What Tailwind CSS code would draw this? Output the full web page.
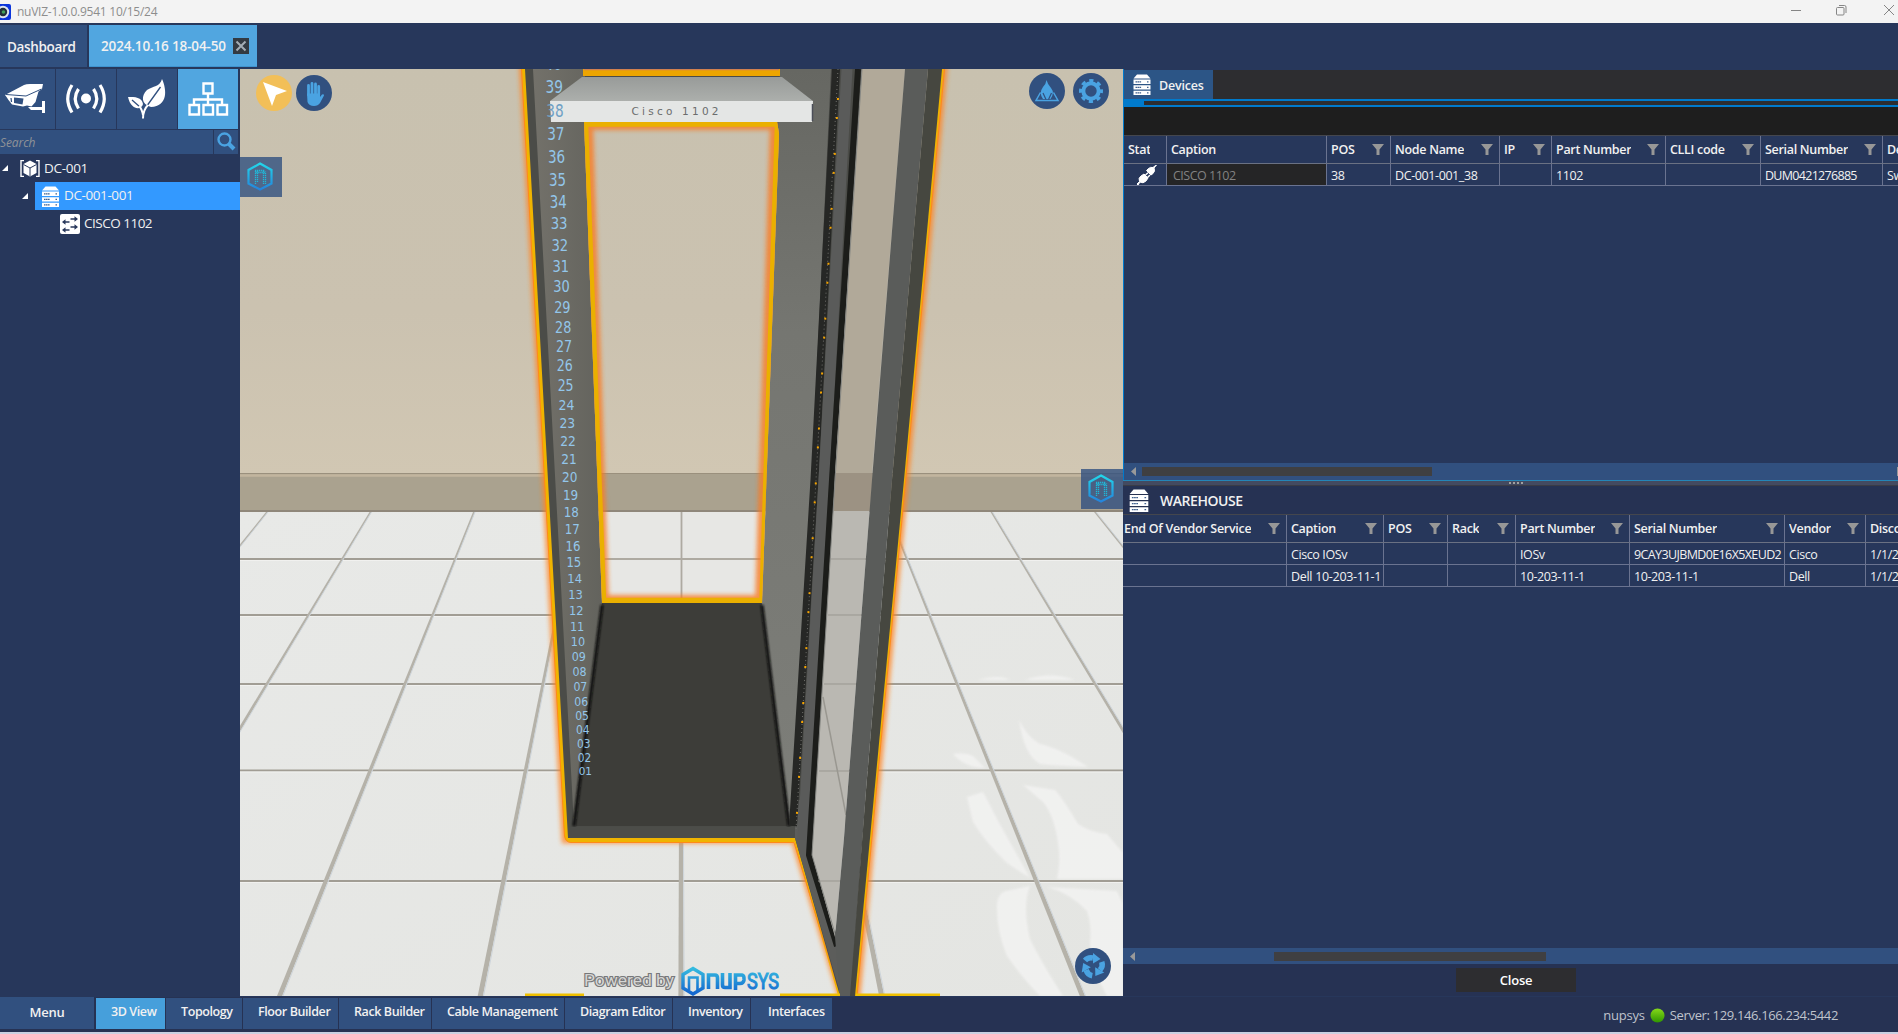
<!DOCTYPE html>
<html lang="en">
<head>
<meta charset="utf-8">
<title>nuVIZ</title>
<script src="https://cdn.jsdelivr.net/npm/@tailwindcss/browser@4"></script>
</head>
<body class="w-[1898px] h-[1034px] overflow-hidden flex flex-col bg-[#27375b] text-[#f1f1f1] text-[12px] font-['Open_Sans',sans-serif] whitespace-nowrap">
<svg class="absolute w-0 h-0">
  <defs>
    <linearGradient id="hexg" x1="0" y1="0" x2="0" y2="1"><stop offset="0" stop-color="#22d6ea"/><stop offset="1" stop-color="#2484dc"/></linearGradient>
    <symbol id="funnel" viewBox="0 0 12 11"><path d="M0 0H12L7.5 5.5V11H4.5V5.5Z" fill="#979797"/></symbol>
    <symbol id="server" viewBox="0 0 18 21"><path d="M4 0.5H14L17.5 4.5H.5Z" fill="#fff"/><path d="M.5 5.500H17.500V10H.5ZM.5 11.200H17.500V15.500H.5ZM.5 16.700H17.500V21H.5Z" fill="#fff"/><path d="M2.500 7.800H8.500M2.500 13.400H8.500M2.500 18.900H8.500M14 7.800H15.500M14 13.400H15.500M14 18.900H15.500" stroke="#40618f" stroke-width="1.200" stroke-dasharray="1.600 .4"/></symbol>
    <symbol id="hex" viewBox="0 0 26 29"><path d="M13 1.500L24.500 8V21.500L13 27.500L1.500 21.500V8Z" fill="none" stroke="url(#hexg)" stroke-width="2.200"/><path d="M8.500 22V8.500M10.500 20V8.500M8 8.500H18M8.500 10.500H18M16.500 22V8.500M18.500 22V9.500" fill="none" stroke="#20b8d8" stroke-width="1.300" stroke-dasharray="1.300 .7"/></symbol>
  </defs>
</svg>

<!-- window title bar -->
<header class="h-[23px] shrink-0 bg-[#f3f3f3] flex items-center text-[#8d8d8d]">
  <svg class="w-[11px] h-4 shrink-0" viewBox="5 0 11 16"><rect x="0" width="16" height="16" rx="2" fill="#0b35dc"/><circle cx="8" cy="8" r="6.200" fill="#dfe6ee"/><circle cx="8" cy="8" r="4.200" fill="#23303a"/><circle cx="8.500" cy="8" r="1.800" fill="#43a05a"/></svg>
  <span class="ml-1.5 text-[12px] tracking-[-0.25px]">nuVIZ-1.0.0.9541 10/15/24</span>
  <svg class="ml-auto mr-[4px] shrink-0 -mt-1" width="103" height="12" viewBox="0 0 103 12" fill="none" stroke="#858585"><path d="M0 6.500H10M93 1L103 11M103 1L93 11"/><rect x="45.500" y="3.500" width="7.500" height="7.500" rx="1"/><path d="M48 1.500H53.500Q55 1.500 55 3V9"/></svg>
</header>

<!-- document tabs -->
<nav class="h-[46px] shrink-0 flex items-start pt-[2px] gap-[2px] text-[13.5px] font-semibold">
  <div class="w-[87px] h-[42px] bg-[#31507f] pl-[7px] pt-[2px] flex items-center"><span class="tracking-[-0.35px]">Dashboard</span></div>
  <div class="w-[168px] h-[42px] bg-[#51a6e0] border-b border-[#3f93cf] pl-3 pr-2 flex items-center justify-between"><span class="tracking-[-0.15px] pt-[2px]">2024.10.16 18-04-50</span>
    <svg class="shrink-0" width="16" height="16" viewBox="0 0 16 16"><rect width="16" height="16" fill="#333a42"/><path d="M3.500 3.500L12.500 12.500M12.500 3.500L3.500 12.500" stroke="#a4adb5" stroke-width="2"/></svg>
  </div>
</nav>

<main class="h-[927px] shrink-0 flex">
  <!-- navigation tree -->
  <aside class="w-[240px] shrink-0 flex flex-col">
    <div class="h-[60px] flex gap-px">
      <div class="w-[55px] bg-[#31507f]"><svg width="55" height="60" viewBox="0 0 55 60"><path d="M5 26L24 16Q26 15 30 15L43 15L42 20L38.500 22.500L35.500 33L31.500 37.500L27 36.500L23 37.500L12 35.500L8.500 31L6.500 28Z" fill="#fff"/><path d="M14 28.500L23.500 29.500L22.500 35.500L14 34Z" fill="#31507f"/><path d="M6 25.500L26 27L41.500 20" fill="none" stroke="#31507f" stroke-width="1"/><path d="M11 29L11.500 33" stroke="#31507f" stroke-width="1.300"/><path d="M28 38L42 38V32H45V44H42V41H31Z" fill="#fff"/></svg></div>
      <div class="w-[60px] bg-[#31507f]"><svg width="60" height="60" viewBox="0 0 60 60" fill="none" stroke="#fff" stroke-width="3.200"><circle cx="30" cy="29.500" r="5" fill="#fff" stroke="none"/><path d="M22.500 20Q16 29.500 22.500 39.500M37.500 20Q44 29.500 37.500 39.500M16 16Q7.500 29.500 16 43.500M44 16Q52.500 29.500 44 43.500"/></svg></div>
      <div class="w-[60px] bg-[#31507f]"><svg width="60" height="60" viewBox="0 0 60 60"><path d="M45 10C50 21 51 37 34 38C24 35 24 27 30 21C36 17 43 18 45 10ZM11 28C18 28 25 28 26 35C25 41 14 42 11 28Z" fill="#fff"/><path d="M43.500 18L32 34L27.500 40M15 31L23 38" fill="none" stroke="#31507f" stroke-width="1.300"/><path d="M31 36C27 40 26 44 26 49.500M22 37Q25 40 26 46" fill="none" stroke="#fff" stroke-width="2"/></svg></div>
      <div class="w-[60px] bg-[#51a6e0]"><svg width="60" height="60" viewBox="0 0 60 60" fill="none" stroke="#fff" stroke-width="2.400"><path d="M25.500 14.500H34.500V24.500H25.500ZM11.500 36H21V45.500H11.500ZM25.500 36H35V45.500H25.500ZM39.500 36H49V45.500H39.500ZM30 25V36M16 36V30.500H44V36" /></svg></div>
    </div>
    <div class="h-[24px] mt-px mr-[2px] flex gap-px">
      <div class="w-[213px] bg-[#31507f] text-[#8f9297] italic leading-[25px]"><span class="tracking-[-0.1px]">Search</span></div>
      <div class="w-[24px] bg-[#31507f]"><svg width="24" height="24" viewBox="0 0 24 24" fill="none" stroke="#4aa3e2"><circle cx="10.500" cy="9.500" r="6" stroke-width="2.400"/><path d="M15 14L20 19" stroke-width="4"/></svg></div>
    </div>
    <ul class="text-[13.5px]">
      <li class="h-[28px] flex items-center"><svg class="ml-[2px]" width="6" height="6"><path d="M6 0V6H0Z" fill="#fff"/></svg>
        <svg class="ml-[12px]" width="20" height="17" viewBox="0 0 20 17"><path d="M4 .5H1V16.500H4M16 .5H19V16.500H16" fill="none" stroke="#fff" stroke-width="1.400"/><path d="M10 .5L16.500 4V13L10 16.500L3.500 13V4Z" fill="#fff"/><path d="M3.500 4.500L10 8L16.500 4.500M10 8V16" stroke="#27375b" fill="none"/></svg>
        <span class="ml-[4px] tracking-[-0.3px]">DC-001</span></li>
      <li class="h-[28px] flex items-center"><svg class="ml-[22px]" width="6" height="6"><path d="M6 0V6H0Z" fill="#fff"/></svg>
        <div class="ml-[7px] w-[205px] h-[28px] bg-[#3399ff] flex items-center"><svg class="ml-[6px]" width="19" height="21"><use href="#server"/></svg><span class="ml-[4px] mb-[2px] tracking-[-0.4px]">DC-001-001</span></div></li>
      <li class="h-[28px] flex items-center"><svg class="ml-[60px]" width="20" height="20" viewBox="0 0 20 20"><rect width="20" height="20" rx="2" fill="#fff"/><path d="M10.500 5H16M9.500 8H4M10.500 13H16M9.500 16H4" stroke="#27375b" stroke-width="1.500"/><path d="M14.500 2.300L18 5L14.500 7.700ZM5.500 5.300L2 8L5.500 10.700ZM14.500 10.300L18 13L14.500 15.700ZM5.500 13.300L2 16L5.500 18.700Z" fill="#27375b"/></svg>
        <span class="ml-[4px] mb-[2px] tracking-[-0.5px]">CISCO 1102</span></li>
    </ul>
  </aside>

  <!-- 3D viewport -->
  <section class="relative w-[883px] shrink-0 overflow-hidden">
    <svg class="block" width="883" height="927" viewBox="240 69 883 927">
      <defs>
        <linearGradient id="wall" gradientUnits="userSpaceOnUse" x1="0" y1="69" x2="0" y2="474"><stop offset="0" stop-color="#c8c1af"/><stop offset=".6" stop-color="#cbc2b0"/><stop offset="1" stop-color="#d1c7b3"/></linearGradient>
        <linearGradient id="floor" x1="0" y1="0" x2="1" y2="1"><stop offset="0" stop-color="#e8e9e7"/><stop offset="1" stop-color="#e4e5e2"/></linearGradient>
        <linearGradient id="pl" x1="0" y1="0" x2="1" y2="0"><stop offset="0" stop-color="#73716a"/><stop offset="1" stop-color="#63635d"/></linearGradient>
        <linearGradient id="pr" x1="0" y1="0" x2="0" y2="1"><stop offset="0" stop-color="#666762"/><stop offset=".35" stop-color="#757671"/><stop offset="1" stop-color="#7d7e79"/></linearGradient>
        <linearGradient id="shelf" x1="0" y1="0" x2="0" y2="1"><stop offset="0" stop-color="#989b99"/><stop offset="1" stop-color="#acafac"/></linearGradient>
        <linearGradient id="lg" gradientUnits="userSpaceOnUse" x1="0" y1="968" x2="0" y2="993"><stop offset="0" stop-color="#35bce0"/><stop offset="1" stop-color="#1467cf"/></linearGradient>
        <filter id="b2" x="-20%" y="-20%" width="140%" height="140%"><feGaussianBlur stdDeviation="2"/></filter>
        <filter id="b1"><feGaussianBlur stdDeviation="1"/></filter>
        <clipPath id="hole"><path d="M584 121H777L779 134L762 603H602Z"/></clipPath>
      </defs>
      <rect x="240" y="69" width="883" height="405" fill="url(#wall)"/>
      <rect x="240" y="473" width="883" height="39" fill="#aaa28f"/>
      <path d="M240 473.500H1123" stroke="#9a907d"/><path d="M240 475.500H1123" stroke="#c2b59e" stroke-width="2.500"/>
      <rect x="240" y="511" width="883" height="485" fill="url(#floor)"/>
      <path d="M240 511H1123" stroke="#8f877a" stroke-width="2"/>
      <g fill="#f3f3f2" filter="url(#b1)" opacity=".85">
        <path d="M1019 720Q1028 738 1040 744Q1060 748 1088 767Q1060 766 1040 764Q1024 755 1019 720Z"/>
        <path d="M1023 785L1055 790Q1064 800 1078 824Q1090 832 1107 834L1123 853V879H1057Q1061 860 1058 843Q1054 815 1043 802Z"/>
        <path d="M967 797L983 792Q990 805 997 819L1030 878Q1020 872 1007 863Q985 842 973 822Z"/>
        <path d="M997 904Q998 893 1006 891L1030 886Q1022 905 1030 939Q1040 960 1063 996H1040Q1020 975 1007 956Q996 930 997 904Z"/>
        <path d="M1047 887L1117 891L1123 904V996H1107Q1092 970 1090 945Q1092 925 1087 911Q1070 893 1047 887Z"/>
        <path d="M953 754Q965 752 973 756L985 768Q965 768 953 754ZM978 680Q1000 674 1010 680ZM1025 680Q1050 671 1075 680Z"/>
      </g>
      <g id="grout"></g>

      <!-- selection glow round the rack -->
      <path d="M523 60L566 839H795L842 996H856L944 60" fill="none" stroke="#ff8420" stroke-width="9" filter="url(#b2)" opacity=".75"/>
      <path d="M523.500 60L566.500 836Q567 840 570 840H796L841 998H854.500L942.500 60" fill="none" stroke="#efb400" stroke-width="4.200"/>
      <path d="M521.500 69L564.500 836Q566 842.500 571 842.500H794L837 985M944.500 69L857 996" fill="none" stroke="#ff8a18" stroke-width="1"/>

      <path d="M525 69H862L813 838L812 855L836 937L840 996L795 838H568Z" fill="#4b4c48"/>
      <path d="M795 838V800H815L812 855L836 937L841 996Z" fill="#5c5d5b"/>
      <path d="M533 69H585V121L602 603L574 826Z" fill="url(#pl)"/>
      <path d="M780 69H831L812 470L790 826L762 603Z" fill="url(#pr)"/>
      <path d="M602 603H761L790 826H573Z" fill="#3d3d39"/>
      <path d="M602 605L574 826M762 605L789 826" stroke="#10110f" stroke-width="3" filter="url(#b1)"/>
      <path d="M568 827H795V838H568Z" fill="#4c4d49"/>
      <path d="M836 69L814.500 480L793 826" fill="none" stroke="#262725" stroke-width="8"/>
      <path d="M838 69L816 480L796 830" fill="none" stroke="#70706c" stroke-width="1" stroke-dasharray="1 3"/>
      <path d="M838 98L816 480L796 830" fill="none" stroke="#f5a400" stroke-width="2" stroke-dasharray="2 17 2 34"/>
      <path d="M847 69L824 480L803 840" fill="none" stroke="#5a5b5a" stroke-width="11"/>
      <path d="M858 69L832 480L809 855L837 946" fill="none" stroke="#1c1d1a" stroke-width="6" stroke-linejoin="round"/>
      <path d="M862 69H905L872 480L844 838L835 937L812 855L835 480Z" fill="#bab8b2"/>
      <path d="M862 69H905L872 473H835Z" fill="#b1a999"/><path d="M835 473H873L870 511H833.500Z" fill="#9c9283"/>
      <path d="M831 559H866M828 615H861M824 684H856M819 771H849M818 881H840" stroke="#999790" fill="none"/>
      <path d="M823 697L846 815" stroke="#999790" stroke-width="1.500"/>
      <path d="M862 69L835 480L812 855L836 937" fill="none" stroke="#858682" stroke-width="1"/>
      <path d="M905 69H928L892 480L866 790L851 996H840L835 937L844 838L872 480Z" fill="#5a5c5a"/>
      <path d="M928 69H942L904 480L855 996H850L866 790L892 480Z" fill="#464740"/>

      <!-- opening through the rack -->
      <g clip-path="url(#hole)">
        <path d="M584 121H780V474H584Z" fill="url(#wall)"/><path d="M590 473H780V511H590Z" fill="#aaa28f"/>
        <path d="M590 473.500H780" stroke="#9a907d"/>
        <path d="M590 511H780V605H590Z" fill="#e7e7e4"/>
        <path d="M590 511H780" stroke="#8f877a" stroke-width="2"/><path d="M590 559H780M681.500 512V603" stroke="#aeaaa1" stroke-width="1.800"/>
        <path d="M586 123H777L762 602H602Z" fill="none" stroke="#f97a22" stroke-width="14" filter="url(#b2)" opacity=".8"/>
        <path d="M585.500 124H777.500L762 600.500H603.500Z" fill="none" stroke="#eab000" stroke-width="5.500"/>
      </g>
      <path d="M583 69H780V76H583Z" fill="#eda500"/><path d="M584 69.500H779" stroke="#d08050" stroke-width="1.500"/>
      <path d="M582 77H782L813 101H550Z" fill="url(#shelf)"/><path d="M550 101H813L812 122H551Z" fill="#e4e6e5"/>
      <path d="M812.500 104V121" stroke="#4b4e58" stroke-width="1.500"/>
      <text x="631.500" y="115" font-size="10.500" textLength="87" lengthAdjust="spacing" fill="#6b6d6d" font-family="'DejaVu Sans', sans-serif">Cisco 1102</text>
      <g id="units" fill="#93c6ea" text-anchor="middle" font-family="'DejaVu Sans', sans-serif"></g>

      <g fill="none"><path d="M526 994H582M784 994H836M858 994H940" stroke="#ff9020" stroke-width="6" filter="url(#b1)"/><path d="M525 995H584M780 995H840M856 995H940" stroke="#f0c000" stroke-width="3"/></g>
      <text x="584" y="986" font-size="16" textLength="90" lengthAdjust="spacingAndGlyphs" fill="#d5d5d3" stroke="#77787a" stroke-width="2.200" paint-order="stroke" font-family="Roboto, sans-serif">Powered by</text>
      <path d="M693 968.500L703 974.500V988L693 994L683 988V974.500Z" fill="none" stroke="url(#lg)" stroke-width="3.400"/>
      <path d="M689 990V977.500H697.500V990" fill="none" stroke="url(#lg)" stroke-width="2.600"/>
      <path d="M708.500 989V975H715Q717.500 975 717.500 978V989M722.500 973V985Q722.500 987.500 725 987.500H730V973M735.500 990V975H742Q744.500 975.500 744 980Q743.500 983.500 740 983.500H736" fill="none" stroke="url(#lg)" stroke-width="3.600"/>
      <text x="747" y="989" font-size="22" textLength="32" lengthAdjust="spacingAndGlyphs" fill="url(#lg)" stroke="url(#lg)" stroke-width="1.100" font-family="Roboto, sans-serif">SYS</text>
    </svg>

    <!-- floating controls -->
    <div class="absolute left-4 top-[6px] flex gap-1">
      <svg width="36" height="36" viewBox="0 0 36 36"><circle cx="18" cy="18" r="18" fill="#f2bf58"/><path d="M7 7L31 16L20 20L16 31Z" fill="#fff"/></svg>
      <svg width="36" height="36" viewBox="0 0 36 36"><circle cx="18" cy="18" r="18" fill="#31507f"/><path d="M12.500 20V10.500M16 19V8.500M19.500 19V9M22.700 20V11.500" stroke="#4aa3e2" stroke-width="2.800" stroke-linecap="round"/><path d="M11 18.500H24V22L26 19.500Q28 18.500 28 20.500L24 28Q22 31 18 31Q13 31 11.500 27Z" fill="#4aa3e2"/></svg>
    </div>
    <div class="absolute left-[789px] top-[4px] flex gap-2">
      <svg width="36" height="36" viewBox="0 0 36 36"><circle cx="18" cy="18" r="18" fill="#31507f"/><path d="M11.500 19.500L7 27.500H29L24.500 19.500" fill="none" stroke="#4aa3e2" stroke-width="1.500"/><path d="M17.500 7Q18.500 11 22 15Q26 20 21.500 26H14Q9.500 20 14 14Q17 11 17.500 7Z" fill="#4aa3e2"/><path d="M14 20L17 26.500M22.500 20L19.500 26.500" stroke="#31507f" stroke-width="1.200"/></svg>
      <svg width="36" height="36" viewBox="0 0 36 36"><circle cx="18" cy="18" r="18" fill="#31507f"/><circle cx="18" cy="18" r="7.700" fill="none" stroke="#4aa3e2" stroke-width="4"/><circle cx="18" cy="18" r="10.500" fill="none" stroke="#4aa3e2" stroke-width="3" stroke-dasharray="4.200 4.047" stroke-dashoffset="2.100"/></svg>
    </div>
    <div class="absolute left-0 top-[88px] w-[42px] h-[40px] bg-[#31507f]/80 pl-[7px] pt-[5px]"><svg width="26" height="29"><use href="#hex"/></svg></div>
    <div class="absolute right-0 top-[400px] w-[42px] h-[40px] bg-[#31507f]/80 pl-[7px] pt-[5px]"><svg width="26" height="29"><use href="#hex"/></svg></div>
    <svg class="absolute left-[835px] top-[879px]" width="36" height="36" viewBox="0 0 36 36"><circle cx="18" cy="18" r="18" fill="#31507f"/><g id="arc"><path d="M10 12.500Q13 9 18 10" fill="none" stroke="#4aa3e2" stroke-width="5.500"/><path d="M18 5L25.500 11L18 15.500Z" fill="#4aa3e2"/></g><use href="#arc" transform="rotate(120 18 18)"/><use href="#arc" transform="rotate(240 18 18)"/></svg>
  </section>

  <!-- device panels -->
  <section class="w-[775px] shrink-0 flex flex-col overflow-hidden">
    <div class="h-[411px] shrink-0 border-l border-[#007acc] flex flex-col">
      <div class="h-[31px] shrink-0 mt-px bg-[#2d2d30] border-b-2 border-[#007acc] flex">
        <div class="w-[89px] bg-[#2c5586] flex items-center font-semibold text-[12.5px]"><svg class="ml-[9px]" width="18" height="21"><use href="#server"/></svg><span class="ml-[8px] mt-[3px] tracking-[-0.2px]">Devices</span></div>
      </div>
      <div class="h-[6px] shrink-0 bg-[#2d2d30] border-b-2 border-[#007acc]"><div class="w-5 h-1 bg-[#007acc]"></div></div>
      <div class="h-[28px] shrink-0 bg-[#1e1e1e]"></div>
      <div id="devices" class="h-[328px] shrink-0 border-t border-[#44464d]"></div>
      <div class="h-[17px] shrink-0 bg-[#31507f] flex items-center"><svg class="ml-[7px]" width="5" height="9"><path d="M5 0V9L0 4.500Z" fill="#999"/></svg><div class="ml-[6px] w-[290px] h-[9px] bg-[#3f3f41]"></div><div class="ml-auto w-px h-[9px] bg-[#999]"></div></div>
    </div>
    <div class="h-[6px] shrink-0 bg-[#434a60] border-t border-t-[#2486b8] border-b border-b-[#3a3c46] flex justify-center pr-5 gap-[2px] pt-px pl-[31px]">
      <i class="w-[2px] h-[2px] bg-[#a0a0a0]"></i><i class="w-[2px] h-[2px] bg-[#a0a0a0]"></i><i class="w-[2px] h-[2px] bg-[#a0a0a0]"></i><i class="w-[2px] h-[2px] bg-[#a0a0a0]"></i>
    </div>
    <div class="h-[28px] shrink-0 bg-[#263253] flex items-center"><svg class="ml-[6px]" width="20" height="23"><use href="#server"/></svg><span class="ml-[11px] text-[14px] font-semibold tracking-[-0.45px]">WAREHOUSE</span></div>
    <div id="warehouse" class="h-[434px] shrink-0 border-t border-[#44464d]"></div>
    <div class="h-[16px] shrink-0 bg-[#31507f] flex items-center"><svg class="ml-[7px]" width="5" height="9"><path d="M5 0V9L0 4.500Z" fill="#999"/></svg><div class="ml-[139px] w-[272px] h-[9px] bg-[#3f3f41]"></div></div>
    <div class="h-[32px] bg-[#263253] pt-1"><div class="ml-[333px] w-[120px] h-6 bg-[#2d2d30] text-white text-[13px] font-semibold flex items-center justify-center"><span class="tracking-[-0.2px] pt-[2px]">Close</span></div></div>
  </section>
</main>

<!-- module bar -->
<footer class="h-[38px] shrink-0 flex items-start bg-[#263253] border-b-2 border-[#c9d0e2] border-t border-t-[#27375b]">
  <div class="w-[94px] h-[32px] bg-[#31507f] flex items-center justify-center text-[13px] font-semibold"><span class="tracking-[-0.3px]">Menu</span></div>
  <div id="modules" class="ml-[2px] mt-px flex gap-px text-[12.5px] font-semibold"></div>
  <div class="ml-auto mr-[60px] h-[37px] flex items-center text-[13px] text-[#bfc3cc]"><span class="tracking-[-0.2px]">nupsys</span><svg class="mx-[5px]" width="15" height="15"><defs><linearGradient id="led" x1="0" y1="0" x2="0" y2="1"><stop offset="0" stop-color="#86d91a"/><stop offset="1" stop-color="#2f9600"/></linearGradient></defs><circle cx="7.500" cy="7.500" r="7" fill="url(#led)"/></svg><span class="tracking-[-0.36px]">Server: 129.146.166.234:5442</span></div>
</footer>

<script>
const funnel = '<svg class="ml-auto mr-[6px] shrink-0 -mt-[1px]" width="12" height="11"><use href="#funnel"/></svg>';
const plug = '<svg class="ml-[8px]" width="20" height="20" viewBox="0 0 20 20"><path d="M19.500 0L17 3Q18.500 6 16 8.500L14 10L9.500 5.500L11 4Q13.500 1.500 16 2.500L18.500 .500ZM7 9L11 13L9 16Q6 19 3 17L1 20L0 19L2.500 16.500Q1 13 4 11Z" fill="#fff" stroke="#fff"/><path d="M8.500 10L11 7.800M10.500 12.500L13 10" stroke="#fff" stroke-width="1.500"/></svg>';
// letter-spacing in px for the long serial numbers
const tight = { 'DUM0421276885': -0.7, '9CAY3UJBMD0E16X5XEUD2': -0.62, 'Dell 10-203-11-1': -0.3 };
// cols: [width, title, has filter]
function table(id, cols, rows, headH, rowHs, first) {
  let h = `<div class="flex border-b border-[#6a7183]" style="height:${headH}px">`;
  cols.forEach((c, i) => h += `<div class="shrink-0 flex items-center overflow-hidden border-r border-[#6a7390] font-semibold text-[12.5px]" style="width:${c[0]}px;padding-left:${i ? 4 : first}px"><span class="overflow-hidden pt-[2px] tracking-[-0.3px]"${c[1] === 'Stat' ? ' style="width:22px"' : ''}>${c[1]}</span>${c[2] ? funnel : ''}</div>`);
  h += '</div>';
  rows.forEach((r, k) => {
    h += `<div class="flex border-b border-[#6a7390]" style="height:${rowHs[k]}px">`;
    cols.forEach((c, i) => {
      const t = r[i];
      h += t === 'plug'
        ? `<div class="shrink-0 flex items-center border-r border-[#6a7390]" style="width:${c[0]}px"><span class="ml-[5px]">${plug}</span></div>`
        : t.startsWith('*')
        ? `<div class="shrink-0 flex items-center bg-[#252526] text-[#828282] pl-[6px] pt-[3px] text-[12.5px] tracking-[-0.5px] border-r border-[#6a7390]" style="width:${c[0]}px">${t.slice(1)}</div>`
        : `<div class="shrink-0 flex items-center pl-[4px] pt-[3px] text-[12.5px] tracking-[-0.4px] border-r border-[#6a7390]" style="width:${c[0]}px${tight[t] ? ';letter-spacing:' + tight[t] + 'px' : ''}">${t}</div>`;
    });
    h += '</div>';
  });
  document.getElementById(id).innerHTML = h;
}
table('devices',
  [[43,'Stat',0],[160,'Caption',0],[64,'POS',1],[109,'Node Name',1],[52,'IP',1],[114,'Part Number',1],[95,'CLLI code',1],[122,'Serial Number',1],[60,'Description',0]],
  [['plug','*CISCO 1102','38','DC-001-001_38','','1102','','DUM0421276885','Switch']], 28, [22], 4);
table('warehouse',
  [[164,'End Of Vendor Service',1],[97,'Caption',1],[64,'POS',1],[68,'Rack',1],[114,'Part Number',1],[155,'Serial Number',1],[81,'Vendor',1],[80,'Discovered',0]],
  [['','Cisco IOSv','','','IOSv','9CAY3UJBMD0E16X5XEUD2','Cisco','1/1/2024'],['','Dell 10-203-11-1','','','10-203-11-1','10-203-11-1','Dell','1/1/2024']], 28, [22,22], 1);

document.getElementById('modules').innerHTML = [['3D View',69],['Topology',76],['Floor Builder',95],['Rack Builder',92],['Cable Management',132],['Diagram Editor',107],['Inventory',77],['Interfaces',81]]
  .map(([t, w], i) => `<div class="h-[31px] flex items-center ${i ? 'bg-[#31507f]' : 'bg-[#469fdb]'}" style="width:${w}px;padding-left:${i === 7 ? 17 : 15}px"><span class="-mt-[2px] tracking-[-0.4px]">${t}</span></div>`).join('');

let g = '';
for (const y of [559, 615, 684, 770.500, 881]) g += `<path d="M240 ${y}H1123" stroke="#a19d94" stroke-width="2"/><path d="M240 ${y + 1.5}H1123" stroke="#f1f1ef"/>`;
for (let k = -5; k <= 5; k++) {
  const a = 681 + k * 103.5, b = 681 + k * 200.7;
  g += `<path d="M${a - 1} 512H${a + 1}L${b + 2.6} 996H${b - 2.6}Z" fill="#b5b2a9"/><path d="M${a + 1} 512L${b + 3.2} 996" stroke="#cdd4da" stroke-width="1"/>`;
}
document.getElementById('grout').innerHTML = g;

// rack unit labels, bottom (01) to top
const ys = [771.5,758,744,730,716,701.5,687,672,657,642,626.5,611,595,579,562.5,546,529,512,495,477,459.5,441,423,404.5,386,366,347,327.5,307.5,287,266,245,223.5,202,180,157,134,111,87,64];
document.getElementById('units').innerHTML = ys.map((y, i) => {
  const f = 11.3 + i * 0.12 + i * i * 0.0015, w = 13.3 + i * 0.11;
  return `<text x="${585.3 - i * 0.82}" y="${y + f * 0.34}" font-size="${f}" textLength="${w}" lengthAdjust="spacingAndGlyphs"${i === 37 ? ' fill="#6ea0c4"' : ''}>${String(i + 1).padStart(2, '0')}</text>`;
}).join('');
</script>
</body>
</html>
